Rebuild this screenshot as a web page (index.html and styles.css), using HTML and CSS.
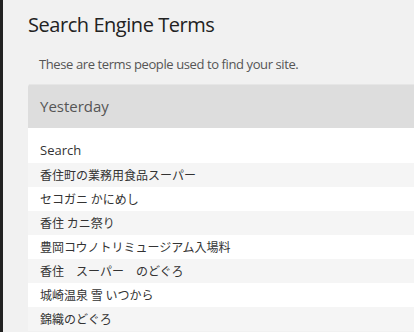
FILE: index.html
```html
<!DOCTYPE html>
<html lang="ja">
<head>
    <meta charset="UTF-8">
    <meta name="viewport" content="width=device-width, initial-scale=1.0">
    <title>Search Engine Terms</title>
    <link rel="stylesheet" href="styles.css">
</head>
<body>
    <div class="sidebar"></div>
    <div class="main">
        <h1>Search Engine Terms</h1>
        <p class="description">These are terms people used to find your site.</p>

        <div class="panel">
            <div class="panel-header">Yesterday</div>
            <div class="panel-body">
                <div class="table-head">Search</div>
                <ul class="terms">
                    <li>香住町の業務用食品スーパー</li>
                    <li>セコガニ かにめし</li>
                    <li>香住 カニ祭り</li>
                    <li>豊岡コウノトリミュージアム入場料</li>
                    <li>香住　スーパー　のどぐろ</li>
                    <li>城崎温泉 雪 いつから</li>
                    <li>錦織のどぐろ</li>
                </ul>
            </div>
        </div>
    </div>
</body>
</html>
```

FILE: styles.css
```css
* {
    margin: 0;
    padding: 0;
    box-sizing: border-box;
}

body {
    background: #f1f1f1;
    color: #333;
    font-family: 'Open Sans', 'Noto Sans CJK JP', sans-serif;
    display: flex;
    min-height: 100vh;
    overflow: hidden;
}

.sidebar {
    width: 3px;
    flex-shrink: 0;
    background: #222;
}

.main {
    padding: 11px 0 0 25px;
    flex: 1;
    min-width: 0;
}

h1 {
    font-size: 20px;
    font-weight: 400;
    color: #222;
    line-height: 28px;
    letter-spacing: -0.45px;
}

.description {
    font-size: 13px;
    color: #555;
    margin: 16px 0 0 11px;
    line-height: 18px;
    letter-spacing: -0.4px;
}

.panel {
    margin-top: 11px;
    border-radius: 3px 0 0 0;
    overflow: hidden;
    background: #fff;
}

.panel-header {
    background: #ddd;
    border-top: 1px solid #e6e6e6;
    height: 44px;
    padding: 10px 0 0 12px;
    font-size: 15px;
    color: #555;
    line-height: 22px;
}

.table-head {
    padding: 13px 0 0 12px;
    height: 35px;
    font-size: 13px;
    color: #333;
    line-height: 18px;
}

.terms {
    list-style: none;
}

.terms li {
    height: 24px;
    line-height: 24px;
    padding-left: 12px;
    font-family: 'Noto Sans CJK JP', sans-serif;
    font-size: 12px;
    color: #333;
}

.terms li:nth-child(odd) {
    background: #f5f5f5;
}
```
